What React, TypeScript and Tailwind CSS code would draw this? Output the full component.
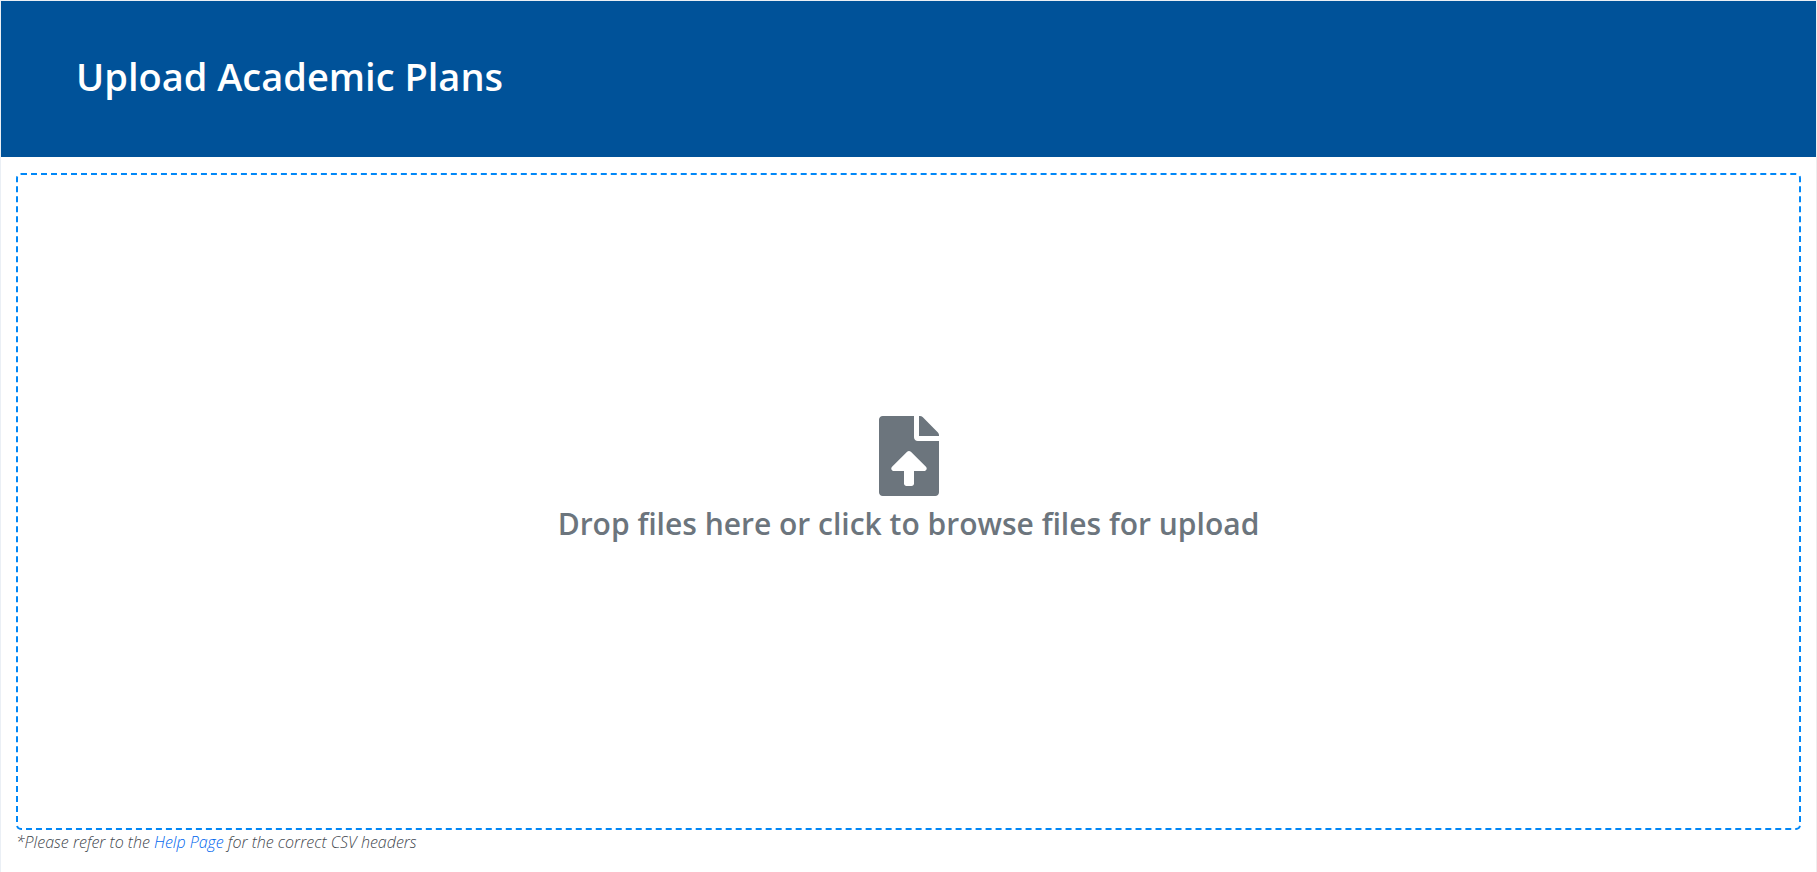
import { FaFileUpload } from "react-icons/fa";

export default function App() {
  return (
    <div className="flex min-h-screen flex-col border-x border-t border-[#eaeff5] border-r-[#eeeeee] bg-white font-['Open_Sans','Noto_Sans',sans-serif]">
      <header className="bg-[#005299] px-[75px] pt-[51px] pb-[57px]">
        <h1 className="text-[38px] leading-[48px] font-semibold text-white">
          Upload Academic Plans
        </h1>
      </header>
      <main className="flex flex-1 flex-col px-[15px] pt-4 pb-[18px]">
        <label
          htmlFor="plans"
          className="flex flex-1 cursor-pointer flex-col items-center justify-center gap-2 rounded-[5px] border-2 border-dashed border-[#0087f7] pb-11 text-[#6c757d]"
        >
          <FaFileUpload className="size-20" aria-hidden="true" />
          <span className="text-[30px] leading-[40px] font-semibold">
            Drop files here or click to browse files for upload
          </span>
          <input id="plans" type="file" multiple accept=".csv" className="sr-only" />
        </label>
        <p className="text-base leading-6 font-light text-[#3f474e] italic">
          *Please refer to the{" "}
          <a href="#help" className="text-[#0066ee]">
            Help Page
          </a>{" "}
          for the correct CSV headers
        </p>
      </main>
    </div>
  );
}
